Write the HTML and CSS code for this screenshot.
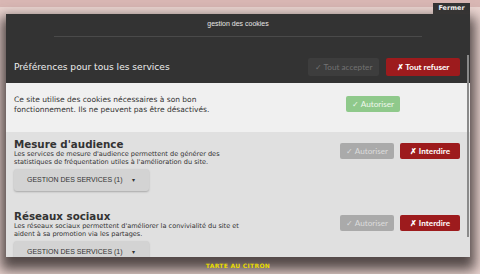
FILE: index.html
```html
<!DOCTYPE html>
<html lang="fr">
<head>
<meta charset="utf-8">
<title>Gestion des cookies</title>
<link rel="stylesheet" href="styles.css">
</head>
<body>
<div class="modal">
  <div class="tabrow"><span class="close">Fermer</span></div>
  <div class="panel">
    <div class="head">
      <div class="title">gestion des cookies</div>
      <div class="rule"></div>
      <div class="allrow">
        <span class="alltitle">Préférences pour tous les services</span>
        <div class="btns">
          <span class="btn off">✓ Tout accepter</span>
          <span class="btn deny">✗ Tout refuser</span>
        </div>
      </div>
    </div>
    <div class="mandatory">
      <p class="mtext">Ce site utilise des cookies nécessaires à son bon<br>fonctionnement. Ils ne peuvent pas être désactivés.</p>
      <span class="btn allow">✓ Autoriser</span>
    </div>
    <div class="cat">
      <div class="catinfo">
        <h2 class="cattitle">Mesure d'audience</h2>
        <p class="catdesc">Les services de mesure d'audience permettent de générer des<br>statistiques de fréquentation utiles à l'amélioration du site.</p>
        <span class="manage">GESTION DES SERVICES (1) <span class="caret">▾</span></span>
      </div>
      <div class="btns">
        <span class="btn grey">✓ Autoriser</span>
        <span class="btn deny small">✗ Interdire</span>
      </div>
    </div>
    <div class="cat">
      <div class="catinfo">
        <h2 class="cattitle">Réseaux sociaux</h2>
        <p class="catdesc">Les réseaux sociaux permettent d'améliorer la convivialité du site et<br>aident à sa promotion via les partages.</p>
        <span class="manage">GESTION DES SERVICES (1) <span class="caret">▾</span></span>
      </div>
      <div class="btns">
        <span class="btn grey">✓ Autoriser</span>
        <span class="btn deny small">✗ Interdire</span>
      </div>
    </div>
    <div class="scrollbar"></div>
  </div>
  <div class="brand">TARTE AU CITRON</div>
</div>
</body>
</html>
```
FILE: styles.css
```css
html, body {
  margin: 0;
  padding: 0;
}
body {
  width: 480px;
  height: 274px;
  overflow: hidden;
  font-family: "DejaVu Sans", Verdana, sans-serif;
  background:
    linear-gradient(to bottom, #d9b7b4 0, #d9b7b4 7px, #ebd5d1 7px, #ebd5d1 100%);
}
.modal {
  width: 464px;
  margin-left: 6px;
  padding-top: 3px;
  display: flex;
  flex-direction: column;
}
.tabrow {
  display: flex;
  justify-content: flex-end;
  height: 11px;
}
.close {
  width: 37px;
  height: 11px;
  background: #333;
  color: #fff;
  font-weight: bold;
  font-size: 6.5px;
  line-height: 11px;
  text-align: center;
}
.panel {
  position: relative;
  height: 243px;
  overflow: hidden;
  background: #e0e0e0;
  box-shadow: 0 8px 12px 5px rgba(66, 58, 56, 0.9);
}
.head {
  background: #333;
  display: flex;
  flex-direction: column;
}
.title {
  height: 22px;
  box-sizing: border-box;
  padding-top: 5px;
  font-family: "Liberation Sans", Arial, sans-serif;
  font-size: 7px;
  line-height: 10px;
  color: #e6e6e6;
  text-align: center;
}
.rule {
  height: 1px;
  margin: 0 48px;
  background: #4a4a4a;
}
.allrow {
  height: 46px;
  box-sizing: border-box;
  padding: 0 10px 7px 8px;
  display: flex;
  align-items: flex-end;
  justify-content: space-between;
}
.alltitle {
  font-size: 9.1px;
  line-height: 18px;
  color: #eee;
}
.btns {
  display: flex;
  gap: 6px;
}
.allrow .btns {
  gap: 7px;
}
.btn {
  display: flex;
  align-items: center;
  justify-content: center;
  height: 16px;
  border-radius: 2px;
  font-family: Lato, sans-serif;
  font-size: 8.2px;
  box-sizing: border-box;
}
.allrow .btn {
  height: 18px;
}
.off {
  width: 71px;
  background: #3d3d3d;
  color: #727272;
}
.deny {
  width: 74px;
  background: #9d1b1d;
  color: #fff;
  font-weight: bold;
}
.deny.small {
  width: 60px;
}
.allow {
  width: 54px;
  background: #8fc98b;
  color: #eef7ec;
  margin-top: 1px;
}
.grey {
  width: 54px;
  background: #aaa;
  color: #dcdcdc;
}
.mandatory {
  height: 49px;
  box-sizing: border-box;
  padding: 12px 70px 0 8px;
  background: #f0f0f0;
  display: flex;
  justify-content: space-between;
  align-items: flex-start;
}
.mtext {
  margin: 0;
  font-size: 7.5px;
  line-height: 10px;
  color: #333;
}
.cat {
  height: 72px;
  box-sizing: border-box;
  padding: 6px 10px 0 8px;
  display: flex;
  justify-content: space-between;
  align-items: flex-start;
}
.cat .btns {
  margin-top: 5px;
}
.catinfo {
  display: flex;
  flex-direction: column;
  align-items: flex-start;
}
.cattitle {
  margin: 0;
  font-size: 10.3px;
  line-height: 12px;
  font-weight: bold;
  color: #333;
}
.catdesc {
  margin: 0;
  font-size: 6.55px;
  line-height: 8px;
  color: #333;
}
.manage {
  margin-top: 3px;
  width: 135px;
  height: 22px;
  border-radius: 3px;
  background: #d3d3d3;
  box-shadow: 0 1px 2px rgba(0, 0, 0, 0.25);
  font-family: "Liberation Sans", Arial, sans-serif;
  font-size: 7px;
  line-height: 22px;
  color: #333;
  padding-left: 13px;
  box-sizing: border-box;
}
.caret {
  font-size: 6px;
  margin-left: 7px;
}
.scrollbar {
  position: absolute;
  right: 1px;
  top: 41px;
  width: 2px;
  height: 182px;
  background: #8a8a8a;
}
.brand {
  margin-top: 4px;
  text-align: center;
  font-weight: bold;
  font-size: 6px;
  letter-spacing: 0.3px;
  line-height: 10px;
  color: #e8dc00;
  position: relative;
}
```
